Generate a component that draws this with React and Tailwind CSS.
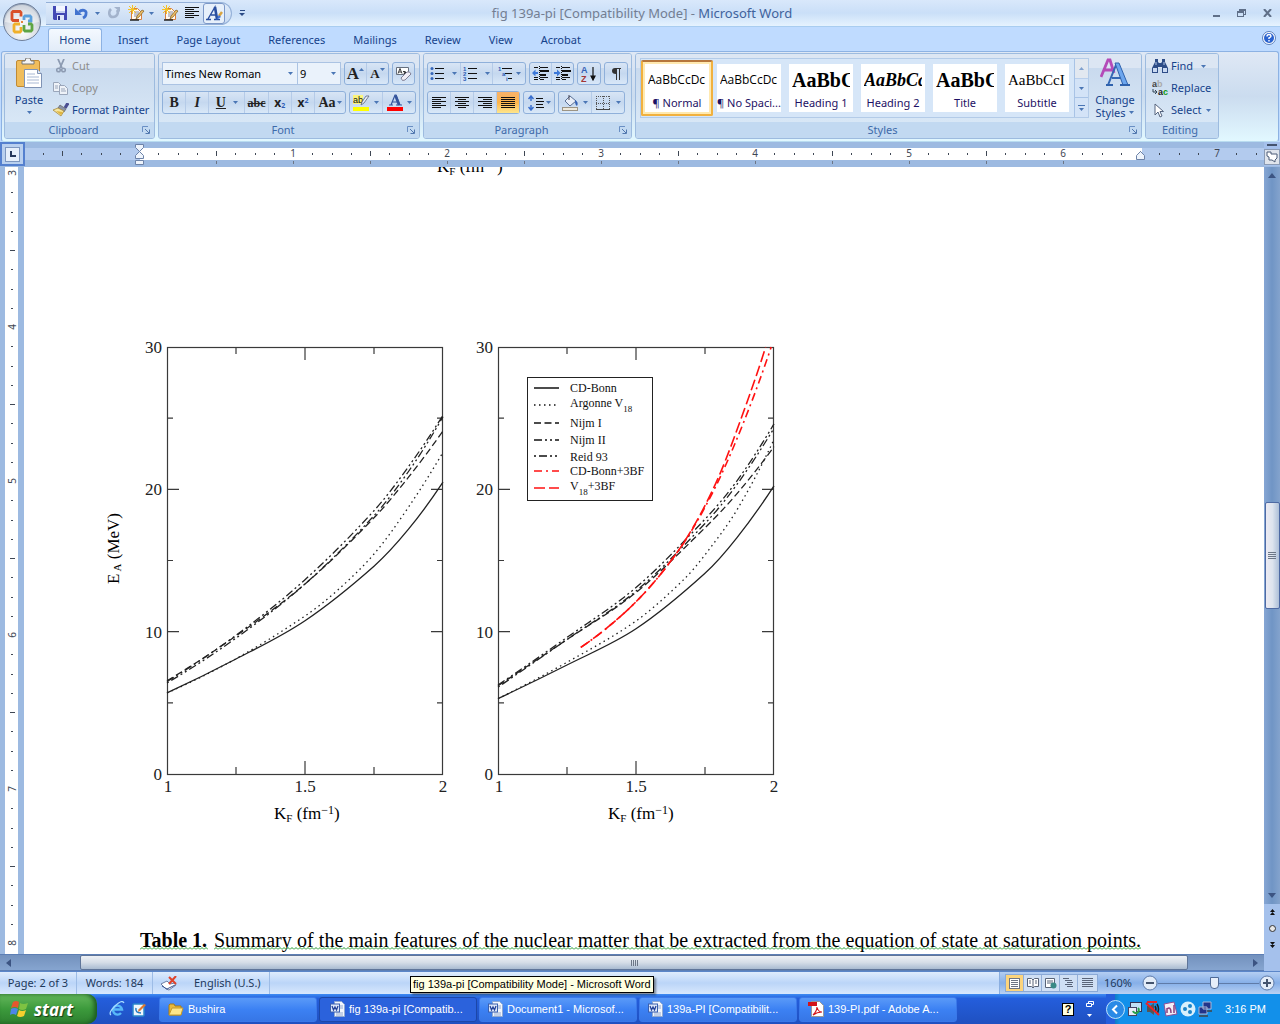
import React from "react";

const DOC_TITLE = "fig 139a-pi [Compatibility Mode] - Microsoft Word";

/* ===================== SMALL ICONS ===================== */
const Caret = ({ className = "" }) => (
  <svg width="5" height="3" viewBox="0 0 5 3" className={`shrink-0 ${className}`}>
    <path d="M0 0h5L2.5 3z" fill="#4a76b5" />
  </svg>
);

const SaveIcon = () => (
  <svg width="14" height="14" viewBox="0 0 14 14">
    <path d="M0 0h14v14H1L0 13z" fill="#4348b4" />
    <path d="M3 0h9v7H3z" fill="#f3f6ff" />
    <path d="M4 9h7v5H4z" fill="#dfe6fa" />
    <path d="M5 10h2v4H5z" fill="#2c318c" />
    <path d="M3 5h9v2H3z" fill="#c3cdf0" />
  </svg>
);

const UndoIcon = () => (
  <svg width="14" height="13" viewBox="0 0 14 13">
    <path d="M4 5c3-3 8-2 7 2 0 2-1 3-3 4" fill="none" stroke="#4273cf" strokeWidth="2.800" />
    <path d="M0 1v7h7z" fill="#4273cf" />
  </svg>
);

const RedoIcon = () => (
  <svg width="12" height="12" viewBox="0 0 12 12">
    <path d="M3 2C0 5 1 10 5 10s6-4 4-7" fill="none" stroke="#a3b3cc" strokeWidth="2.600" />
    <path d="M6 0h6v5z" fill="#a3b3cc" />
  </svg>
);

const DraftIcon = () => (
  <svg width="17" height="16" viewBox="0 0 17 16">
    <path d="M3.500 3.500h6l4 4v7h-10z" fill="#fff8f0" stroke="#d9803f" />
    <path d="M6 7h5M6 9h6M6 11h5" stroke="#8a8fa8" />
    <path d="M16 6l-5 6-3 2 1-3 5-6z" fill="#eec06a" stroke="#7b5a20" strokeWidth=".7" />
    <path d="M4.500 0v9M0 4.500h9M1 1l7 7M8 1L1 8" stroke="#f5c227" />
    <path d="M2 15h9" stroke="#222" strokeWidth="1.500" />
  </svg>
);

const LinesIcon = ({ rows, w = 14, color = "#111" }) => (
  <svg width={w} height={rows.length * 2} viewBox={`0 0 ${w} ${rows.length * 2}`} shapeRendering="crispEdges">
    {rows.map(([x, len], i) => (
      <rect key={i} x={x} y={i * 2} width={len} height="1" fill={color} />
    ))}
  </svg>
);

const LEFT = [[0, 14], [0, 9], [0, 14], [0, 9], [0, 14], [0, 9]];
const CENTER = [[0, 14], [3, 8], [0, 14], [3, 8], [0, 14], [3, 8]];
const RIGHT = [[0, 14], [5, 9], [0, 14], [5, 9], [0, 14], [5, 9]];
const FULL = [[0, 14], [0, 14], [0, 14], [0, 14], [0, 14], [0, 14]];

const StyleAIcon = () => (
  <svg width="17" height="16" viewBox="0 0 17 16">
    <path d="M0 14.500h5M8 14.500h6M2 14L9 2l2 12M5 10h6" fill="none" stroke="#2a4fa0" strokeWidth="1.400" />
    <path d="M9 2l2 12" stroke="#2a4fa0" strokeWidth="2.600" />
    <path d="M16 7l-3 4" stroke="#d9a441" strokeWidth="2.500" />
    <path d="M13 10l-3 5 5-3z" fill="#3c6fd0" />
  </svg>
);

const PasteIcon = () => (
  <svg width="27" height="31" viewBox="0 0 27 31">
    <rect x=".5" y="2.500" width="23" height="26" rx="1.500" fill="#f0bd5c" stroke="#c08a34" />
    <path d="M6 6V3h3l1-3h4l1 3h3v3z" fill="#f4f4f4" stroke="#777" />
    <path d="M8.500 11.500h13l4 4v14h-17z" fill="#fff" stroke="#7f93b5" />
    <path d="M21.500 11.500v4h4" fill="#dfe8f6" stroke="#7f93b5" />
    <path d="M11 16h8M11 19h12M11 22h12M11 25h12" stroke="#a9b9d4" />
  </svg>
);

const CutIcon = () => (
  <svg width="10" height="14" viewBox="0 0 10 14" fill="none" stroke="#8d9bb2">
    <path d="M2 0l4 9M8 0L4 9" strokeWidth="1.800" />
    <circle cx="2.500" cy="11" r="1.800" strokeWidth="1.500" />
    <circle cx="7.500" cy="11" r="1.800" strokeWidth="1.500" />
  </svg>
);

const CopyIcon = () => (
  <svg width="15" height="13" viewBox="0 0 15 13" fill="#eef2f8" stroke="#9aa6ba">
    <path d="M.5.5h5l3 3v6h-8z" />
    <path d="M6.500 3.500h5l3 3v6h-8z" />
    <path d="M2 4h3M2 6h3M8 7h4M8 9h5" />
  </svg>
);

const PainterIcon = () => (
  <svg width="16" height="14" viewBox="0 0 16 14">
    <path d="M15 0l-3 5" stroke="#4b4f92" strokeWidth="3.200" />
    <path d="M7 2l6 4-2 3-6-4z" fill="#8b93a8" stroke="#555" strokeWidth=".6" />
    <path d="M5 5l6 3-3 5-8-6z" fill="#f5e6a0" stroke="#a8893a" strokeWidth=".8" />
    <path d="M3 8l5 4 2-3z" fill="#e0b53f" />
  </svg>
);

const LauncherIcon = () => (
  <svg width="8" height="8" viewBox="0 0 8 8" fill="none">
    <path d="M.5 6V.5H6" stroke="#6a8fc4" />
    <path d="M3 3l4 4M7.500 3.500v4h-4" stroke="#5177ae" />
  </svg>
);

const EraserIcon = () => (
  <svg width="17" height="16" viewBox="0 0 17 16">
    <path d="M1.500 1.500h12v7h-12z" fill="#fff" stroke="#66707f" />
    <path d="M3 7.500l2-5 2 5M4 6h2M8 5.500q3-1 3 2H9q-1-1 2-1" fill="none" stroke="#222" strokeWidth=".9" />
    <path d="M6 12l6-6q3-1 4 2l-6 6q-3 2-4-2z" fill="#f1eef6" stroke="#807f95" />
  </svg>
);

const ListIcon = ({ kind }) => (
  <svg width="14" height="15" viewBox="0 0 14 15">
    {[2, 7, 12].map((y, i) => (
      <g key={y}>
        {kind === "bullet" ? (
          <circle cx="2" cy={y + 0.5} r="1.500" fill="#3464b8" />
        ) : (
          <text x={kind === "multi" ? i * 4 : 0} y={y + 3} fontSize="6" fontWeight="700" fontFamily="Liberation Sans" fill="#2d5cb5">
            {kind === "multi" ? ["1", "a", "i"][i] : i + 1}
          </text>
        )}
        <rect x={kind === "multi" ? 4 + i * 3 : 5} y={y} width={kind === "multi" ? 10 - i * 3 : 9} height="1" fill="#111" />
      </g>
    ))}
  </svg>
);

const IndentIcon = ({ flip }) => (
  <svg width="17" height="15" viewBox="0 0 17 15">
    <g shapeRendering="crispEdges" fill="#111">
      <path d="M2 1h4v1H2zM8 1h8v1H8zM8 4h9v2H8zM8 8h6v2H8zM2 11h4v1H2zM8 11h8v1H8zM2 13h4v1H2zM8 13h4v1H8z" />
      <path d="M7 0h1v1H7zM7 2h1v1H7zM7 4h1v1H7zM7 6h1v1H7zM7 8h1v1H7zM7 10h1v1H7zM7 12h1v1H7z" />
    </g>
    <path d={flip ? "M0 6h3V3.500L6.500 7 3 10.500V8H0z" : "M6 6H3.500V3.500L0 7l3.500 3.500V8H6z"} fill="#3c78d8" />
  </svg>
);

const SortIcon = () => (
  <svg width="16" height="16" viewBox="0 0 16 16">
    <text x="0" y="7" fontSize="9" fontWeight="700" fontFamily="Liberation Sans" fill="#3461b5">A</text>
    <text x="0" y="16" fontSize="9" fontWeight="700" fontFamily="Liberation Sans" fill="#a33636">Z</text>
    <path d="M12 1v12M10 10l2 4 2-4z" fill="#111" stroke="#111" strokeWidth="1.200" />
  </svg>
);

const PilcrowIcon = () => (
  <svg width="10" height="14" viewBox="0 0 10 14">
    <path d="M4 1h6v1H9v11H8V2H6v11H5V7Q1 7 1 4t3-3z" fill="#333" />
  </svg>
);

const SpacingIcon = () => (
  <svg width="16" height="16" viewBox="0 0 16 16">
    <path d="M3 1v5M3 10v5M.5 4L3 1l2.500 3M.5 12L3 15l2.500-3" fill="none" stroke="#3a6fce" strokeWidth="1.500" />
    <path d="M8 3.500h7M8 6.500h8M8 9.500h7M8 12.500h8" stroke="#111" />
  </svg>
);

const BucketIcon = () => (
  <svg width="17" height="16" viewBox="0 0 17 16">
    <path d="M3 6l5-5 6 5-6 5z" fill="#e8eef8" stroke="#5b6f93" />
    <path d="M7 0v5" stroke="#445" />
    <path d="M13 5q4 2 2 6-2-1-2-5z" fill="#3461b5" />
    <rect x=".5" y="12.500" width="15" height="3" fill="#eee9dc" stroke="#9c9484" />
  </svg>
);

const BordersIcon = () => (
  <svg width="14" height="14" viewBox="0 0 14 14" stroke="#555" fill="none" shapeRendering="crispEdges">
    <path d="M0 .5h14M0 7.500h14M.5 0v14M7.500 0v14M13.500 0v14" strokeDasharray="1 1" />
    <path d="M0 13.500h14" stroke="#444" />
  </svg>
);

const HighlightIcon = () => (
  <svg width="17" height="17" viewBox="0 0 17 17">
    <rect x="0" y="1" width="10" height="9" fill="#fbf47a" />
    <text x="0" y="9" fontSize="9" fontFamily="Liberation Sans" fill="#111">ab</text>
    <path d="M16 2l-5 7-3 2 1-3 4-6z" fill="#e8edf6" stroke="#5b6680" strokeWidth=".8" />
    <rect x="0" y="13" width="16" height="4" fill="#ffff00" />
  </svg>
);

const FontColorIcon = () => (
  <svg width="16" height="17" viewBox="0 0 16 17">
    <path d="M2 11h4M9 11h6M4 11L8 1h1l4 10M5 8h6" fill="none" stroke="#34549c" strokeWidth="1.200" />
    <path d="M8.500 1.500L12 11" stroke="#34549c" strokeWidth="2.600" />
    <rect x="0" y="13" width="16" height="4" fill="#f00" />
  </svg>
);

const ChangeStylesIcon = () => (
  <svg width="30" height="29" viewBox="0 0 30 29">
    <path d="M1 19L8 2h2l4 13M4 12h9" fill="none" stroke="#b44bb8" strokeWidth="2.800" />
    <path d="M8 27l8-20h2l8 20M12 20h11" fill="none" stroke="#3468b4" strokeWidth="2" />
    <path d="M15 5h4l9 22h-5z" fill="#6ca6ee" stroke="#2f62ad" />
    <path d="M6 27h7M20 27h10" stroke="#2f62ad" strokeWidth="2" />
  </svg>
);

const FindIcon = () => (
  <svg width="16" height="14" viewBox="0 0 16 14">
    <path d="M3 0h3v3l1 1h2l1-1V0h3v3l3 6v5h-6V8H6v6H0V9l3-6z" fill="#2d4c87" />
    <path d="M1 9h4v4H1zM11 9h4v4h-4z" fill="#c9d9f2" />
    <path d="M4 3v3M12 3v3" stroke="#b5c9ea" />
  </svg>
);

const ReplaceIcon = () => (
  <svg width="17" height="16" viewBox="0 0 17 16" fontFamily="Liberation Sans" fontWeight="700" fontSize="9">
    <text x="0" y="7" fill="#444">a<tspan fill="#aaa">b</tspan></text>
    <text x="6" y="15" fill="#222">a<tspan fill="#129a12">c</tspan></text>
    <path d="M1 9v3h4M3 10l2 2-2 2" fill="none" stroke="#345" />
  </svg>
);

const SelectIcon = () => (
  <svg width="10" height="15" viewBox="0 0 10 15">
    <path d="M1 1v11l3-3 2 5 2-1-2-4.500h3.500z" fill="#fff" stroke="#56657f" />
  </svg>
);

const HelpIcon = () => (
  <svg width="14" height="14" viewBox="0 0 14 14">
    <circle cx="7" cy="7" r="6.500" fill="#fff" stroke="#5b7fbb" />
    <circle cx="7" cy="7" r="5" fill="#2a62cf" />
    <path d="M5 5.500q0-2 2-2t2 1.500q0 1-2 2v1M7 9v1.500" fill="none" stroke="#fff" strokeWidth="1.400" />
  </svg>
);

const OfficeLogo = () => (
  <svg width="40" height="40" viewBox="0 0 40 40">
    <defs>
      <radialGradient id="orb" cx="50%" cy="75%" r="75%">
        <stop offset="0" stopColor="#fff" />
        <stop offset=".6" stopColor="#d5dae2" />
        <stop offset="1" stopColor="#9aa6b8" />
      </radialGradient>
    </defs>
    <circle cx="20" cy="20" r="18.500" fill="url(#orb)" stroke="#6f7f9a" />
    <path d="M3 20a17 17 0 0 1 34 0q-17 4-34 0z" fill="#fff" opacity=".45" />
    <g fill="none" strokeWidth="2.800">
      <path d="M17 18.500h-6l-1-1v-7l1-1h7l1 1v4" stroke="#d9502a" />
      <path d="M22 18v-3l1-1h5l1 1v4h-3" stroke="#5ba0dd" />
      <path d="M18 22h-5l-1 1v6l1 1h5l1-1v-4" stroke="#f0b02a" />
      <path d="M22 23v5l1 1h6l1-1v-5l-1-1h-3" stroke="#5fa544" />
    </g>
    <path d="M19 19h2v2h-2z" fill="#e7843a" />
  </svg>
);

const WordIcon = () => (
  <svg width="15" height="16" viewBox="0 0 15 16">
    <path d="M4.500.5h7l3 3v12h-10z" fill="#f2f6fd" stroke="#8fa8d2" />
    <path d="M10 5h3M10 7h3M6 12h7M6 14h7" stroke="#93a9d0" />
    <rect x=".5" y="3" width="9" height="8" fill="#dfe9fa" stroke="#3a5fae" />
    <path d="M2 5l1.500 4L5 6l1.500 3L8 5" fill="none" stroke="#27459a" strokeWidth="1.300" />
  </svg>
);

const PdfIcon = () => (
  <svg width="16" height="16" viewBox="0 0 16 16">
    <path d="M3.500.5h8l4 4v11h-12z" fill="#fff" stroke="#999" />
    <rect x="0" y="1" width="9" height="4" fill="#d3141a" />
    <path d="M5 14q4-4 4-8 1 5 5 5-5 0-9 3" fill="none" stroke="#d3141a" strokeWidth="1.200" />
  </svg>
);

const FolderIcon = () => (
  <svg width="16" height="13" viewBox="0 0 16 13">
    <path d="M1 12V2l1-1h4l1 2h6v9z" fill="#e9b93c" stroke="#a87b16" />
    <path d="M1 12l3-7h11l-2 7z" fill="#fde58a" stroke="#c49a2b" />
  </svg>
);

const IeIcon = () => (
  <svg width="16" height="16" viewBox="0 0 16 16" fill="none">
    <path d="M4 8.500h9a4.500 4.500 0 1 0-1 3.500" stroke="#58b8f8" strokeWidth="2.400" />
    <path d="M2 14Q-1 12 6 5t9-3" stroke="#a8dcff" strokeWidth="1.200" />
  </svg>
);

const DesktopIcon = () => (
  <svg width="15" height="15" viewBox="0 0 15 15">
    <rect x="1" y="2" width="11" height="12" rx="1" fill="#eef6fd" stroke="#2d88cc" strokeWidth="1.500" />
    <path d="M14 3L8 9l-2 1 .5-2.500L12 2z" fill="#e2782c" />
    <path d="M4 6q-1 5 5 5" fill="none" stroke="#2379bf" strokeWidth="1.500" />
  </svg>
);

const FlagIcon = () => (
  <svg width="19" height="18" viewBox="0 0 19 18">
    <path d="M3 2q3-2 6 0L8 8Q5 6 1 8z" fill="#e4572e" />
    <path d="M10 3q3 2 8 0l-2 6q-4 2-7 0z" fill="#7ec242" />
    <path d="M1 9q3-2 7 0l-2 6q-3-2-6 0z" fill="#4d86e8" />
    <path d="M9 10q3 2 7 0l-2 6q-4 2-7 0z" fill="#f6cf2e" />
  </svg>
);

const SpellIcon = () => (
  <svg width="17" height="15" viewBox="0 0 17 15">
    <path d="M0 8l6-3 3 3 5-1 1 2-7 5-3-1z" fill="#fff" stroke="#6c7fa6" />
    <path d="M1 10l5 3 8-4" fill="none" stroke="#3c5590" />
    <path d="M8 1l7 7M15 0L8 8" stroke="#e0432a" strokeWidth="2" />
  </svg>
);

/* ===================== RIBBON PARTS ===================== */
const RibbonGroup = ({ title, className = "", launcher = true, children }) => (
  <section className={`flex flex-col overflow-hidden rounded-[3px] border border-[#9dbbdf] bg-linear-to-b from-[#dfe8f5] to-[#d9e8f8] ${className}`}>
    <div className="min-h-0 flex-1 bg-linear-to-b from-[#dce6f3] from-20% via-[#c9daee] via-21% to-[#d8e7f6]">{children}</div>
    <div className="flex h-4 shrink-0 items-center bg-[#c2d9f1] pr-1 text-[#3e6aaa]">
      <span className="flex-1 text-center leading-4">{title}</span>
      {launcher && (
        <button aria-label={`${title} options`}>
          <LauncherIcon />
        </button>
      )}
    </div>
  </section>
);

const ToolGroup = ({ children, className = "" }) => (
  <div className={`flex h-[23px] divide-x divide-[#b5cbe8] rounded-[3px] border border-[#8fb0da] bg-linear-to-b from-[#d8e5f5] via-[#c5d8ef] to-[#d9e8f8] ${className}`}>
    {children}
  </div>
);

const Tool = ({ label, caret, className = "", children }) => (
  <button aria-label={label} className={`flex flex-1 items-center justify-center gap-1 ${className}`}>
    {children}
    {caret && <Caret />}
  </button>
);

const Combo = ({ label, value, className }) => (
  <label className={`flex items-center border border-[#abc3e3] bg-[#eaf2fb] pr-1 ${className}`}>
    <select aria-label={label} defaultValue={value} className="min-w-0 flex-1 appearance-none bg-transparent pl-[2px] text-black outline-none">
      <option>{value}</option>
    </select>
    <Caret />
  </label>
);

const STYLES = [
  { name: "¶ Normal", sample: "AaBbCcDc", font: "font-['Open_Sans',sans-serif] text-[12px]", active: true },
  { name: "¶ No Spaci...", sample: "AaBbCcDc", font: "font-['Open_Sans',sans-serif] text-[12px]" },
  { name: "Heading 1", sample: "AaBbCc", font: "font-['Liberation_Serif',serif] text-[20px] font-bold" },
  { name: "Heading 2", sample: "AaBbCc", font: "font-['Liberation_Serif',serif] text-[18px] font-bold italic" },
  { name: "Title", sample: "AaBbCc", font: "font-['Liberation_Serif',serif] text-[20px] font-bold" },
  { name: "Subtitle", sample: "AaBbCcI", font: "font-['Liberation_Serif',serif] text-[15px]" },
];

const StyleCard = ({ name, sample, font, active }) => (
  <button
    className={`flex h-14 w-[72px] shrink-0 items-center justify-center rounded-[2px] ${
      active ? "border-2 border-[#f1b13f] border-t-[#b5763d] bg-[#ffe9b0]" : ""
    }`}
  >
    <span className="flex h-12 w-16 flex-col items-center overflow-hidden bg-white">
      <span className={`flex h-8 w-[58px] items-center overflow-hidden whitespace-nowrap text-black ${font}`}>{sample}</span>
      <span className="whitespace-nowrap leading-[14px] text-[#1d1164]">{name}</span>
    </span>
  </button>
);

const TABS = ["Insert", "Page Layout", "References", "Mailings", "Review", "View", "Acrobat"];

const TitleBar = () => (
  <header className="flex h-[27px] items-center border-b border-[#a9cdf0] bg-linear-to-b from-[#d9e8fb] via-[#cadff8] to-[#e6f3fe] pl-[46px] pr-1">
    <div className="flex h-[23px] w-[186px] items-center rounded-r-full border border-l-0 border-[#94b0d8] bg-linear-to-b from-[#dfebfa] to-[#c8dbf3] pl-[7px]">
      <button aria-label="Save"><SaveIcon /></button>
      <button aria-label="Undo" className="ml-2 flex items-center gap-[6px]"><UndoIcon /><Caret /></button>
      <button aria-label="Repeat" className="ml-2"><RedoIcon /></button>
      <button aria-label="Draft" className="ml-2 flex items-center gap-1"><DraftIcon /><Caret /></button>
      <button aria-label="Edit" className="ml-2"><DraftIcon /></button>
      <button aria-label="Align left" className="ml-[6px]"><LinesIcon rows={LEFT} /></button>
      <button aria-label="Styles" className="ml-1 flex h-[21px] w-[22px] items-center justify-center rounded-[3px] border border-[#7c98c8] bg-[#e7f0fb]"><StyleAIcon /></button>
    </div>
    <button aria-label="Customize" className="ml-[7px] flex flex-col items-center gap-[2px]">
      <span className="h-px w-[5px] bg-[#2a4a85]" />
      <svg width="6" height="3" viewBox="0 0 6 3"><path d="M0 0h6L3 3z" fill="#2a4a85" /></svg>
    </button>
    <h1 className="flex-1 pr-[174px] text-center text-[13px] text-[#737e92]">
      fig 139a-pi [Compatibility Mode] - <span className="text-[#41639c]">Microsoft Word</span>
    </h1>
    <div className="flex items-center gap-[17px] pr-1">
      <button aria-label="Minimize" className="mt-[6px] h-[2px] w-[7px] bg-[#5f6f88]" />
      <button aria-label="Restore">
        <svg width="9" height="8" viewBox="0 0 9 8" fill="none" stroke="#5f6f88" shapeRendering="crispEdges">
          <path d="M2.500 2V.5h6v5H7M2 1h6M.5 2.500h6v5h-6zM0 3h7" />
        </svg>
      </button>
      <button aria-label="Close">
        <svg width="9" height="8" viewBox="0 0 9 8"><path d="M1 0l7 8M8 0L1 8" stroke="#5f6f88" strokeWidth="2" /></svg>
      </button>
    </div>
  </header>
);

const TabBar = () => (
  <nav className="flex h-6 items-end bg-[#bfdbff] pl-12 pr-1 text-[#15428b]">
    <a href="#home" className="mr-4 flex h-[23px] w-[54px] items-center justify-center rounded-t-[3px] border border-b-0 border-[#8db2e3] bg-linear-to-b from-[#f4f9ff] to-[#e2ecf8]">
      Home
    </a>
    <div className="flex flex-1 gap-7">
      {TABS.map((tab) => (
        <a key={tab} href={`#${tab}`} className="flex h-[23px] items-center whitespace-nowrap">
          {tab}
        </a>
      ))}
    </div>
    <button aria-label="Help" className="mb-[6px]"><HelpIcon /></button>
  </nav>
);

const Ribbon = () => (
  <div className="mx-px flex h-[91px] gap-[3px] rounded-[3px] border border-[#8db2e3] border-b-[#b9dcf0] bg-linear-to-b from-[#dfe8f5] via-[#cbdcef] to-[#e2f8ff] pb-[2px] pl-[2px] pt-px text-[#15428b]">
    <RibbonGroup title="Clipboard" className="w-[151px]">
      <div className="flex pl-2">
        <button className="flex w-[32px] flex-col items-center pt-1">
          <PasteIcon />
          <span className="pt-[2px] leading-[18px]">Paste</span>
          <Caret className="mt-[2px]" />
        </button>
        <div className="flex flex-col pl-2 pt-px">
          <button className="flex h-[22px] items-center text-[#8d8d8d]"><span className="flex w-[19px] justify-center pr-1"><CutIcon /></span>Cut</button>
          <button className="flex h-[22px] items-center text-[#8d8d8d]"><span className="flex w-[19px] justify-center pr-1"><CopyIcon /></span>Copy</button>
          <button className="flex h-[22px] items-center whitespace-nowrap"><span className="flex w-[19px]"><PainterIcon /></span>Format Painter</button>
        </div>
      </div>
    </RibbonGroup>

    <RibbonGroup title="Font" className="w-[262px]">
      <div className="flex flex-col gap-[6px] px-[3px] pt-2">
        <div className="flex h-[23px]">
          <Combo label="Font" value="Times New Roman" className="w-[136px]" />
          <Combo label="Font size" value="9" className="w-[43px] border-l-0" />
          <ToolGroup className="ml-[3px] w-[45px] font-['Liberation_Serif',serif] font-bold text-[#222]">
            <Tool label="Grow font"><span className="text-[17px] leading-none">A</span><Caret className="-ml-1 mb-2 rotate-180" /></Tool>
            <Tool label="Shrink font"><span className="text-[13px] leading-none">A</span><Caret className="-ml-1 mb-2" /></Tool>
          </ToolGroup>
          <ToolGroup className="ml-[3px] w-[23px]"><Tool label="Clear formatting"><EraserIcon /></Tool></ToolGroup>
        </div>
        <div className="flex h-[23px] gap-[3px]">
          <ToolGroup className="w-[184px] font-['Liberation_Serif',serif] text-[14px] font-bold text-[#222]">
            <Tool label="Bold">B</Tool>
            <Tool label="Italic"><i>I</i></Tool>
            <Tool label="Underline" caret className="min-w-[36px] gap-[7px]"><u>U</u></Tool>
            <Tool label="Strikethrough"><s className="text-[12px]">abc</s></Tool>
            <Tool label="Subscript"><span className="font-['Open_Sans',sans-serif] text-[12px]">x<sub className="text-[7px] text-[#2d5cb5]">2</sub></span></Tool>
            <Tool label="Superscript"><span className="font-['Open_Sans',sans-serif] text-[12px]">x<sup className="text-[7px] text-[#2d5cb5]">2</sup></span></Tool>
            <Tool label="Change case" caret className="min-w-[30px] gap-px">Aa</Tool>
          </ToolGroup>
          <ToolGroup className="w-[67px]">
            <Tool label="Highlight" caret><HighlightIcon /></Tool>
            <Tool label="Font color" caret><FontColorIcon /></Tool>
          </ToolGroup>
        </div>
      </div>
    </RibbonGroup>

    <RibbonGroup title="Paragraph" className="w-[209px]">
      <div className="flex flex-col gap-[6px] px-[3px] pt-2">
        <div className="flex gap-[3px]">
          <ToolGroup className="w-[99px]">
            <Tool label="Bullets" caret className="gap-2"><ListIcon kind="bullet" /></Tool>
            <Tool label="Numbering" caret className="gap-2"><ListIcon kind="number" /></Tool>
            <Tool label="Multilevel" caret><ListIcon kind="multi" /></Tool>
          </ToolGroup>
          <ToolGroup className="w-[45px]">
            <Tool label="Decrease indent"><IndentIcon /></Tool>
            <Tool label="Increase indent"><IndentIcon flip /></Tool>
          </ToolGroup>
          <ToolGroup className="w-[24px]"><Tool label="Sort"><SortIcon /></Tool></ToolGroup>
          <ToolGroup className="w-[24px]"><Tool label="Show marks"><PilcrowIcon /></Tool></ToolGroup>
        </div>
        <div className="flex gap-[3px]">
          <ToolGroup className="w-[93px]">
            <Tool label="Align left"><LinesIcon rows={LEFT} /></Tool>
            <Tool label="Center"><LinesIcon rows={CENTER} /></Tool>
            <Tool label="Align right"><LinesIcon rows={RIGHT} /></Tool>
            <Tool label="Justify" className="bg-linear-to-b from-[#f7b26a] via-[#fcb54c] to-[#fde68c]"><LinesIcon rows={FULL} /></Tool>
          </ToolGroup>
          <ToolGroup className="w-[32px]"><Tool label="Line spacing" caret className="gap-[2px]"><SpacingIcon /></Tool></ToolGroup>
          <ToolGroup className="w-[67px]">
            <Tool label="Shading" caret><BucketIcon /></Tool>
            <Tool label="Borders" caret className="gap-[6px]"><BordersIcon /></Tool>
          </ToolGroup>
        </div>
      </div>
    </RibbonGroup>

    <RibbonGroup title="Styles" className="w-[507px]">
      <div className="flex pl-1 pt-1">
        <div className="flex h-[60px] border border-[#b3cbe8] bg-[#d6e6f8]">
          <div className="flex w-[433px] items-center">
            {STYLES.map((style) => (
              <StyleCard key={style.name} {...style} />
            ))}
          </div>
          <div className="flex w-[14px] flex-col divide-y divide-[#a8c3e6] border-l border-[#a8c3e6] bg-[#d3e3f7]">
            <Tool label="Scroll up" className="bg-[#ececec] opacity-60"><Caret className="rotate-180" /></Tool>
            <Tool label="Scroll down"><Caret /></Tool>
            <Tool label="More" className="flex-col gap-[2px]"><span className="h-px w-[7px] bg-[#4a76b5]" /><Caret /></Tool>
          </div>
        </div>
        <button className="flex flex-1 flex-col items-center">
          <ChangeStylesIcon />
          <span className="pt-[6px] leading-[13px]">Change</span>
          <span className="flex items-center gap-1 leading-[13px]">Styles <Caret /></span>
        </button>
      </div>
    </RibbonGroup>

    <RibbonGroup title="Editing" launcher={false} className="w-[74px]">
      <div className="flex flex-col pl-[6px] pt-px">
        <button className="flex h-[22px] items-center"><span className="w-[19px]"><FindIcon /></span>Find<Caret className="ml-2" /></button>
        <button className="flex h-[22px] items-center"><span className="w-[19px]"><ReplaceIcon /></span>Replace</button>
        <button className="flex h-[22px] items-center"><span className="w-[19px] pl-[2px]"><SelectIcon /></span>Select<Caret className="ml-1" /></button>
      </div>
    </RibbonGroup>
  </div>
);

/* ===================== RULERS ===================== */
const EIGHTH = 154 / 8;
const range = (from, to) => Array.from({ length: to - from + 1 }, (_, i) => from + i);

const HorizontalRuler = () => (
  <div className="flex h-6 bg-[#9dbae1]">
    <button aria-label="Tab stop" className="flex w-[25px] items-center justify-center border-2 border-[#5480cf] bg-[#b9d0ef]">
      <span className="flex h-[15px] w-[15px] items-center justify-center border border-[#7d97c0] bg-[#e6effb]">
        <span className="h-[6px] w-[6px] border-b-2 border-l-2 border-[#26385c]" />
      </span>
    </button>
    <div className="relative flex-1 overflow-hidden">
      <div className="mt-[6px] flex h-3">
        <div className="w-[115px] bg-[#b3cbee]" />
        <div className="w-[1002px] bg-white" />
        <div className="flex-1 bg-[#b3cbee]" />
      </div>
      <svg className="absolute inset-0 h-full w-full" fontSize="10" textAnchor="middle" fill="#3f4754">
        <g shapeRendering="crispEdges">
          {range(-5, 58).map((i) => {
            const x = Math.round(114 + i * EIGHTH);
            if (i % 8 === 0) return null;
            return i % 4 === 0 ? (
              <rect key={i} x={x} y="9" width="1" height="5" />
            ) : (
              <rect key={i} x={x} y="11" width="1" height="2" />
            );
          })}
          {range(1, 12).map((i) => (
            <rect key={i} x={Math.round(114 + i * 77)} y="19" width="1" height="3" fill="#6d7686" />
          ))}
        </g>
        {range(1, 7).map((n) => (
          <text key={n} x={114 + n * 154} y="15">{n}</text>
        ))}
        <g fill="#eef4fc" stroke="#6d83a8">
          <path d="M110.500 2.500h8v3l-4 4 4 4v3h-8v-3l4-4-4-4z" />
          <path d="M110.500 18.500h8v4h-8z" />
          <path d="M1111.500 17.500v-4l4-4 4 4v4z" />
        </g>
      </svg>
    </div>
    <div className="flex w-4 flex-col items-center gap-[3px] bg-[#a5c1ec] pt-[2px]">
      <span className="h-[2px] w-[10px] bg-[#44546f]" />
      <button aria-label="View ruler" className="border border-[#8a9bb5] bg-[#dfe4ec] p-px">
        <svg width="12" height="12" viewBox="0 0 12 12" fill="#fff" stroke="#4d5d78">
          <path d="M1 1h4v2h6v4L9 9v2L6 9H3V6L1 5z" />
        </svg>
      </button>
    </div>
  </div>
);

const VerticalRuler = () => (
  <div className="flex w-6 shrink-0 bg-[#9dbae1] pl-[5px]">
    <svg className="h-full w-[13px] bg-white" fontSize="10" textAnchor="middle" fill="#3f4754">
      {range(0, 40).map((i) => {
        const y = Math.round(6 + i * EIGHTH);
        if (i % 8 === 0) {
          return (
            <text key={i} transform={`translate(11 ${y}) rotate(-90)`}>
              {3 + i / 8}
            </text>
          );
        }
        return <rect key={i} x={i % 4 === 0 ? 5 : 6} y={y} width={i % 4 === 0 ? 5 : 2} height="1" shapeRendering="crispEdges" />;
      })}
    </svg>
  </div>
);

/* ===================== CHARTS ===================== */
const PLOT_W = 276;
const PLOT_H = 427;
const toPx = ([k, e]) => [(k - 1) * PLOT_W, PLOT_H - (e / 30) * PLOT_H];

// smooth curve: central-difference slope at every point, joined by beziers
const linePath = (points) => {
  const p = points.map(toPx);
  const last = p.length - 1;
  const secant = (a, b) => (p[b][1] - p[a][1]) / (p[b][0] - p[a][0]);
  const slope = (i) => {
    if (i === 0) return 2 * secant(0, 1) - secant(0, 2);
    if (i === last) return 2 * secant(last - 1, last) - secant(last - 2, last);
    return secant(i - 1, i + 1);
  };
  let d = `M${p[0][0]} ${p[0][1].toFixed(1)}`;
  for (let i = 0; i < last; i++) {
    const [x1, y1] = p[i];
    const [x2, y2] = p[i + 1];
    const h = (x2 - x1) / 3;
    d += `C${[x1 + h, y1 + h * slope(i), x2 - h, y2 - h * slope(i + 1), x2, y2].map((n) => n.toFixed(1)).join(" ")}`;
  }
  return d;
};

const DASH = {
  solid: undefined,
  dotted: "1.500 3.500",
  dashed: "7 3.500",
  dashDot: "8 3 2 3 2 3",
  dotDash: "2 3 8 3 2 3",
  redDot: "8 4 2 4",
  redDash: "11 4",
};

const LEFT_SERIES = [
  { dash: "solid", points: [[1, 5.7], [1.25, 8.08], [1.5, 10.77], [1.75, 14.6], [1.875, 17.2], [2, 20.5]] },
  { dash: "dotted", points: [[1, 5.7], [1.25, 8.1], [1.5, 11.1], [1.62, 12.95], [1.75, 15.46], [1.875, 18.75], [2, 22.6]] },
  { dash: "dashed", points: [[1, 6.55], [1.25, 9.7], [1.5, 13.35], [1.75, 18], [1.875, 20.85], [2, 24.1]] },
  { dash: "dashDot", points: [[1, 6.5], [1.25, 9.75], [1.5, 13.65], [1.75, 18.5], [1.875, 21.6], [2, 25.2]] },
  { dash: "dotDash", points: [[1, 6.4], [1.25, 9.55], [1.5, 13.35], [1.75, 18.15], [1.875, 21.25], [2, 25.1]] },
];

const RIGHT_SERIES = [
  { dash: "solid", points: [[1, 5.3], [1.25, 7.66], [1.5, 10.2], [1.75, 14.1], [1.866, 16.6], [2, 20.25]] },
  { dash: "dotted", points: [[1, 5.3], [1.25, 7.85], [1.5, 10.75], [1.67, 13.6], [1.75, 15.4], [1.867, 18.6], [2, 23.5]] },
  { dash: "dashed", points: [[1, 6.2], [1.25, 9.45], [1.5, 12.75], [1.75, 17.3], [1.866, 19.7], [2, 23]] },
  { dash: "dashDot", points: [[1, 6.25], [1.25, 9.6], [1.5, 13.1], [1.75, 17.9], [1.866, 20.6], [2, 24.6]] },
  { dash: "dotDash", points: [[1, 6.1], [1.25, 9.45], [1.5, 12.85], [1.75, 17.6], [1.866, 20.35], [2, 24.3]] },
  { dash: "redDot", red: true, points: [[1.3, 8.9], [1.4, 10.35], [1.5, 12.1], [1.6, 14.3], [1.7, 17.05], [1.8, 20.65], [1.9, 25.2], [1.99, 30]] },
  { dash: "redDash", red: true, points: [[1.3, 8.9], [1.4, 10.35], [1.5, 12.1], [1.6, 14.3], [1.7, 17.1], [1.8, 20.9], [1.9, 26], [1.97, 30]] },
];

const LEGEND = [
  { dash: "solid", y: 11, textY: 15, label: "CD-Bonn" },
  { dash: "dotted", y: 28, textY: 30, label: "Argonne V", sub: "18" },
  { dash: "dashed", y: 46, textY: 50, label: "Nijm I" },
  { dash: "dashDot", y: 63, textY: 67, label: "Nijm II" },
  { dash: "dotDash", y: 79, textY: 84, label: "Reid 93" },
  { dash: "redDot", y: 94, textY: 98, label: "CD-Bonn+3BF", red: true },
  { dash: "redDash", y: 111, textY: 113, label: "V", sub: "18", rest: "+3BF", red: true },
];

const Plot = ({ x, series, children }) => (
  <g transform={`translate(${x} 17)`}>
    <g fill="none" stroke="#3a3a3a" strokeWidth="1.200">
      <rect x=".5" y=".5" width={PLOT_W - 1} height={PLOT_H} />
      {[1, 2, 3, 4, 5].map((i) => {
        const y = (PLOT_H / 6) * i;
        const len = i % 2 === 0 ? 12 : 6;
        return <path key={i} d={`M0 ${y}h${len}M${PLOT_W} ${y}h${-len}`} />;
      })}
      {[1, 2, 3].map((i) => {
        const tx = (PLOT_W / 4) * i;
        const len = i === 2 ? 13 : 7;
        return <path key={i} d={`M${tx} 0v${len}M${tx} ${PLOT_H}v${-len}`} />;
      })}
    </g>
    {series.map(({ dash, red, points }) => (
      <path key={dash} d={linePath(points)} fill="none" stroke={red ? "#f11" : "#222"} strokeWidth={red ? 1.6 : 1.3} strokeDasharray={DASH[dash]} />
    ))}
    <g fontSize="17" fill="#222">
      {[30, 20, 10, 0].map((n) => (
        <text key={n} x="-5" y={PLOT_H - (n / 30) * PLOT_H + 6} textAnchor="end">{n}</text>
      ))}
      {[["1", 1], ["1.5", 138], ["2", 276]].map(([label, tx]) => (
        <text key={label} x={tx} y="445" textAnchor="middle">{label}</text>
      ))}
    </g>
    {children}
  </g>
);

const AxisText = ({ x }) => (
  <text x={x} y="489" fontSize="17" fill="#000">
    K<tspan fontSize="11" dy="3">F</tspan><tspan dy="-3"> (fm</tspan><tspan fontSize="12" dy="-5">−1</tspan><tspan dy="5">)</tspan>
  </text>
);

const Charts = () => (
  <svg width="690" height="500" viewBox="0 0 690 500" className="ml-[76px] mt-[153px] block shrink-0" fontFamily="Liberation Serif, serif">
    <text transform="translate(19 254) rotate(-90)" fontSize="17">
      E<tspan fontSize="11" dy="2"> A</tspan><tspan dy="-2"> (MeV)</tspan>
    </text>
    <Plot x={67} series={LEFT_SERIES} />
    <Plot x={398} series={RIGHT_SERIES}>
      <g transform="translate(29 30)">
        <rect x=".5" y=".5" width="125" height="123" fill="#fff" stroke="#222" />
        {LEGEND.map(({ dash, y, textY, label, sub, rest, red }) => (
          <g key={dash}>
            <path d={`M7 ${y}h25`} stroke={red ? "#f11" : "#111"} strokeWidth="1.500" strokeDasharray={DASH[dash]} />
            <text x="43" y={textY} fontSize="12" fill="#111">
              {label}
              {sub && <tspan fontSize="9" dy="5">{sub}</tspan>}
              {rest && <tspan dy="-5">{rest}</tspan>}
            </text>
          </g>
        ))}
      </g>
    </Plot>
    <AxisText x={174} />
    <AxisText x={508} />
  </svg>
);

const Squiggle = ({ id }) => (
  <svg className="block h-[3px] w-full">
    <defs>
      <pattern id={id} width="4" height="3" patternUnits="userSpaceOnUse">
        <path d="M0 2.500L2 .5l2 2" fill="none" stroke="#1f9a2c" />
      </pattern>
    </defs>
    <rect width="100%" height="3" fill={`url(#${id})`} />
  </svg>
);

const DocumentPage = () => (
  <main className="flex min-w-0 flex-1 flex-col overflow-hidden bg-white font-['Liberation_Serif',serif] text-black">
    <p className="-mt-[10px] ml-[413px] h-5 shrink-0 text-[17px] leading-5">
      K<sub className="text-[11px]">F</sub> (fm<sup className="text-[12px]">−1</sup>)
    </p>
    <Charts />
    <div className="ml-[116px] mt-[99px] flex w-[1001px] shrink-0 gap-[6px] text-[20px]">
      <div className="w-[68px] shrink-0">
        <b className="block h-[18px] whitespace-nowrap leading-[22px]">Table 1.</b>
        <Squiggle id="wave-a" />
      </div>
      <div className="flex-1">
        <p className="h-[18px] whitespace-nowrap leading-[22px] [text-align-last:justify]">
          Summary of the main features of the nuclear matter that be extracted from the equation of state at saturation points.
        </p>
        <Squiggle id="wave-b" />
      </div>
    </div>
  </main>
);

/* ===================== SCROLLBARS ===================== */
const HScroll = () => (
  <div className="flex h-[17px] shrink-0 items-center border-y border-[#5d7fb5] bg-linear-to-b from-[#7391bd] to-[#86a5d0]">
    <button aria-label="Scroll left" className="flex w-20 pl-[6px]"><svg width="5" height="8" viewBox="0 0 5 8"><path d="M5 0v8L0 4z" fill="#3c5482" /></svg></button>
    <div className="flex h-[15px] flex-1 items-center justify-center gap-px rounded-[2px] border border-[#5f7599] bg-linear-to-b from-[#eef1f5] via-[#d5dde7] to-[#a9bbd1]">
      {[0, 1, 2, 3].map((i) => (
        <span key={i} className="h-[6px] w-px bg-[#6c7787]" />
      ))}
    </div>
    <button aria-label="Scroll right" className="flex w-[76px] justify-end pr-[6px]"><svg width="5" height="8" viewBox="0 0 5 8"><path d="M0 0v8l5-4z" fill="#3c5482" /></svg></button>
  </div>
);

const VScroll = () => (
  <div className="flex w-4 shrink-0 flex-col bg-[#a5c1ec]">
    <div className="flex flex-1 flex-col items-center bg-linear-to-r from-[#86a6d4] via-[#7095c5] to-[#84a3cd]">
      <button aria-label="Scroll up" className="flex flex-[335] items-start pt-[6px]"><svg width="8" height="5" viewBox="0 0 8 5"><path d="M0 5h8L4 0z" fill="#3c5482" /></svg></button>
      <div className="flex w-[15px] flex-[107] flex-col items-center justify-center gap-px rounded-[2px] border border-[#4e6aa3] bg-linear-to-r from-[#eceaf2] via-[#dde4ee] to-[#aec0d8]">
        {[0, 1, 2, 3].map((i) => (
          <span key={i} className="h-px w-2 bg-[#6c7787]" />
        ))}
      </div>
      <button aria-label="Scroll down" className="flex flex-[295] items-end pb-[6px]"><svg width="8" height="5" viewBox="0 0 8 5"><path d="M0 0h8L4 5z" fill="#3c5482" /></svg></button>
    </div>
    <div className="flex h-[67px] flex-col items-center gap-[10px] pt-[5px]">
      <button aria-label="Previous"><svg width="5" height="6" viewBox="0 0 5 6"><path d="M0 3l2.500-3L5 3zM0 6l2.500-3L5 6z" fill="#111" /></svg></button>
      <button aria-label="Browse object" className="h-[7px] w-[7px] rounded-full border border-[#333] bg-[#e8e8e8]" />
      <button aria-label="Next"><svg width="5" height="6" viewBox="0 0 5 6"><path d="M0 0h5L2.500 3zM0 3h5L2.500 6z" fill="#111" /></svg></button>
    </div>
  </div>
);

/* ===================== STATUS BAR ===================== */
const ZoomButton = ({ plus }) => (
  <button aria-label={plus ? "Zoom in" : "Zoom out"}>
    <svg width="16" height="16" viewBox="0 0 16 16">
      <circle cx="8" cy="8" r="7" fill="#e3ecf8" stroke="#5c79a8" />
      <path d={plus ? "M4 8h8M8 4v8" : "M4 8h8"} stroke="#44536d" strokeWidth="2" />
    </svg>
  </button>
);

const VIEW_ROWS = [[0, 11], [0, 11], [0, 11], [0, 11], [0, 11]];

const StatusBar = () => (
  <footer className="relative flex h-[23px] items-stretch border-t border-[#5b86c9] bg-linear-to-b from-[#dfecfd] via-[#bbd5f8] to-[#d8e8fd] text-[#1e395b]">
    <button className="w-[77px] border-r border-[#9dbce6] text-center">Page: 2 of 3</button>
    <button className="w-[76px] border-r border-[#9dbce6] text-center">Words: 184</button>
    <button aria-label="Proofing" className="flex w-[33px] items-center justify-center"><SpellIcon /></button>
    <button className="w-[84px] border-r border-[#9dbce6] pl-2 text-left">English (U.S.)</button>
    <div className="absolute left-[410px] top-[4px] z-10 whitespace-nowrap border border-black bg-[#ffffe1] px-[2px] font-['Liberation_Sans',sans-serif] leading-[15px] text-black shadow-[2px_2px_2px_#0006]">
      {DOC_TITLE}
    </div>
    <div className="flex-1" />
    <div className="flex items-center border-l border-[#8aaee0] bg-linear-to-b from-[#b4cef2] via-[#86afe8] to-[#b9d1f3] pl-[5px] pr-[5px]">
      <div className="flex h-[18px] divide-x divide-[#93afd8] border border-[#8aa9d6] bg-[#cfdff4]">
        <button aria-label="Print layout" className="flex w-[18px] items-center justify-center bg-[#fcd47c]">
          <span className="border border-[#6d7483] bg-white px-px pt-px"><LinesIcon rows={[[0, 7], [0, 7], [0, 7], [0, 7]]} w={7} color="#6d7483" /></span>
        </button>
        <button aria-label="Reading" className="flex w-[18px] items-center justify-center">
          <svg width="12" height="11" viewBox="0 0 12 11" fill="#fff" stroke="#596478"><path d="M.5.5h4L6 2l1.500-1.500h4v8h-4L6 10 4.500 8.500h-4zM6 2v8M2 3h2M2 5h2M8 3h2M8 5h2" /></svg>
        </button>
        <button aria-label="Web layout" className="flex w-[18px] items-center justify-center">
          <svg width="12" height="11" viewBox="0 0 12 11"><path d="M.5.5h9v9h-9z" fill="#fff" stroke="#596478" /><path d="M2 3h6M2 5h6" stroke="#596478" /><circle cx="8.500" cy="7.500" r="3" fill="#3a8a86" /></svg>
        </button>
        <button aria-label="Outline" className="flex w-[18px] items-center justify-center">
          <LinesIcon rows={[[0, 6], [2, 7], [4, 6], [2, 7], [4, 6]]} w={11} color="#596478" />
        </button>
        <button aria-label="Draft" className="flex w-[19px] items-center justify-center"><LinesIcon rows={VIEW_ROWS} w={11} color="#596478" /></button>
      </div>
      <span className="w-[44px] pr-1 text-center">160%</span>
      <ZoomButton />
      <input
        type="range"
        aria-label="Zoom"
        defaultValue="57"
        className="h-4 w-[101px] appearance-none bg-transparent bg-[linear-gradient(#5f7ba8,#5f7ba8)] bg-[length:100%_1px] bg-center bg-no-repeat [&::-webkit-slider-thumb]:h-3 [&::-webkit-slider-thumb]:w-[9px] [&::-webkit-slider-thumb]:appearance-none [&::-webkit-slider-thumb]:rounded-b-[4px] [&::-webkit-slider-thumb]:border [&::-webkit-slider-thumb]:border-[#4f6a97] [&::-webkit-slider-thumb]:bg-[#e6eefa]"
      />
      <ZoomButton plus />
    </div>
  </footer>
);

/* ===================== TASKBAR ===================== */
const TASKS = [
  { label: "Bushira", icon: <FolderIcon /> },
  { label: "fig 139a-pi [Compatib...", icon: <WordIcon />, active: true },
  { label: "Document1 - Microsof...", icon: <WordIcon /> },
  { label: "139a-PI [Compatibilit...", icon: <WordIcon /> },
  { label: "139-PI.pdf - Adobe A...", icon: <PdfIcon /> },
];

const TrayIcons = () => (
  <svg width="86" height="16" viewBox="0 0 86 16">
    <rect x="3.500" y="1.500" width="11" height="9" fill="#bfe0f5" stroke="#335" />
    <rect x="1.500" y="6.500" width="8" height="8" fill="#e8eef8" stroke="#446" />
    <path d="M6 10a3 3 0 1 0 5-3" fill="none" stroke="#2aa04a" strokeWidth="2" />
    <path d="M20 5h3l4-3v12l-4-3h-3z" fill="#555" />
    <path d="M28 5q2 3 0 6M30 3q3 5 0 10" fill="none" stroke="#222" strokeWidth="1.500" />
    <path d="M19 2l13 12M20 1h10" stroke="#e22" strokeWidth="2" />
    <path d="M37 3l10-2 3 12-11 2z" fill="#f3edf6" stroke="#8c4f96" />
    <path d="M40 12V7M40 8q4-3 4 4M47 4v8" fill="none" stroke="#8c3f7c" strokeWidth="1.500" />
    <circle cx="61" cy="8" r="7.500" fill="#d8f0fc" />
    <circle cx="58" cy="8" r="2" fill="#1c84c8" />
    <circle cx="63" cy="5" r="2" fill="#1c84c8" />
    <circle cx="63" cy="11" r="2" fill="#1c84c8" />
    <path d="M76 1h8v7h-8zM72 6h8v7h-8z" fill="#22348a" stroke="#aab8d8" />
    <path d="M72 15h9M80 10h5" stroke="#444" strokeWidth="1.500" />
  </svg>
);

const Taskbar = () => (
  <div className="flex h-[30px] items-center bg-linear-to-b from-[#3f8cf3] from-0% via-[#245edc] via-15% to-[#1f50c0] font-['Liberation_Sans',sans-serif] text-white">
    <button className="flex h-full w-[97px] items-center gap-[5px] rounded-r-[10px] bg-linear-to-b from-[#64b85c] via-[#3c9a3c] to-[#2d7f2f] pl-[10px] shadow-[inset_-3px_0_4px_#1d5c20]">
      <FlagIcon />
      <span className="font-['Open_Sans',sans-serif] text-[17px] font-bold italic leading-none [text-shadow:1px_1px_1px_#0009]">start</span>
    </button>
    <div className="flex w-[62px] items-center gap-[7px] pl-3">
      <button aria-label="Internet Explorer"><IeIcon /></button>
      <button aria-label="Show desktop"><DesktopIcon /></button>
    </div>
    <div className="flex min-w-0 flex-1 gap-[2px]">
      {TASKS.map(({ label, icon, active }) => (
        <button
          key={label}
          className={`flex h-[25px] w-[158px] items-center gap-1 whitespace-nowrap rounded-[3px] border pl-2 ${
            active ? "border-[#1c47a8] bg-[#2b62dc] pl-[10px]" : "border-[#3a78ea] bg-linear-to-b from-[#5a9af8] via-[#3c81f3] to-[#3676e6]"
          }`}
        >
          {icon}
          <span>{label}</span>
        </button>
      ))}
    </div>
    <div className="flex items-center gap-3 pr-3">
      <button aria-label="Help" className="flex h-[13px] w-3 items-center justify-center border border-black bg-[#ffffe1] font-bold text-black">?</button>
      <button aria-label="Language bar">
        <svg width="8" height="17" viewBox="0 0 8 17" fill="none" stroke="#fff"><path d="M2.500 2V.5h5v3H6M.5 2.500h5v3h-5z" /><path d="M1 13h5l-2.500 3z" fill="#fff" stroke="none" /></svg>
      </button>
    </div>
    <div className="flex h-full w-[174px] items-center gap-[2px] bg-[linear-gradient(90deg,#245edc_9px,#0e7fc4_9px,#1290ea_14px)]">
      <button aria-label="Show hidden icons">
        <svg width="19" height="19" viewBox="0 0 19 19"><circle cx="9.500" cy="9.500" r="9" fill="#2a8ae6" stroke="#bfe3fb" /><path d="M11 5.500l-4 4 4 4" fill="none" stroke="#fff" strokeWidth="2" /></svg>
      </button>
      <TrayIcons />
      <time className="flex-1 pr-1 text-center">3:16 PM</time>
    </div>
  </div>
);

const App = () => (
  <div className="relative flex h-screen flex-col overflow-hidden bg-[#bfdbff] font-['Noto_Sans',sans-serif] text-[11px] leading-4">
    <TitleBar />
    <TabBar />
    <button aria-label="Office" className="absolute left-[2px] top-[2px] z-10"><OfficeLogo /></button>
    <Ribbon />
    <HorizontalRuler />
    <div className="flex min-h-0 flex-1 border-t border-[#9dbae1]">
      <div className="flex min-w-0 flex-1 flex-col">
        <div className="flex min-h-0 flex-1">
          <VerticalRuler />
          <DocumentPage />
        </div>
        <HScroll />
      </div>
      <VScroll />
    </div>
    <StatusBar />
    <Taskbar />
  </div>
);

export default App;
